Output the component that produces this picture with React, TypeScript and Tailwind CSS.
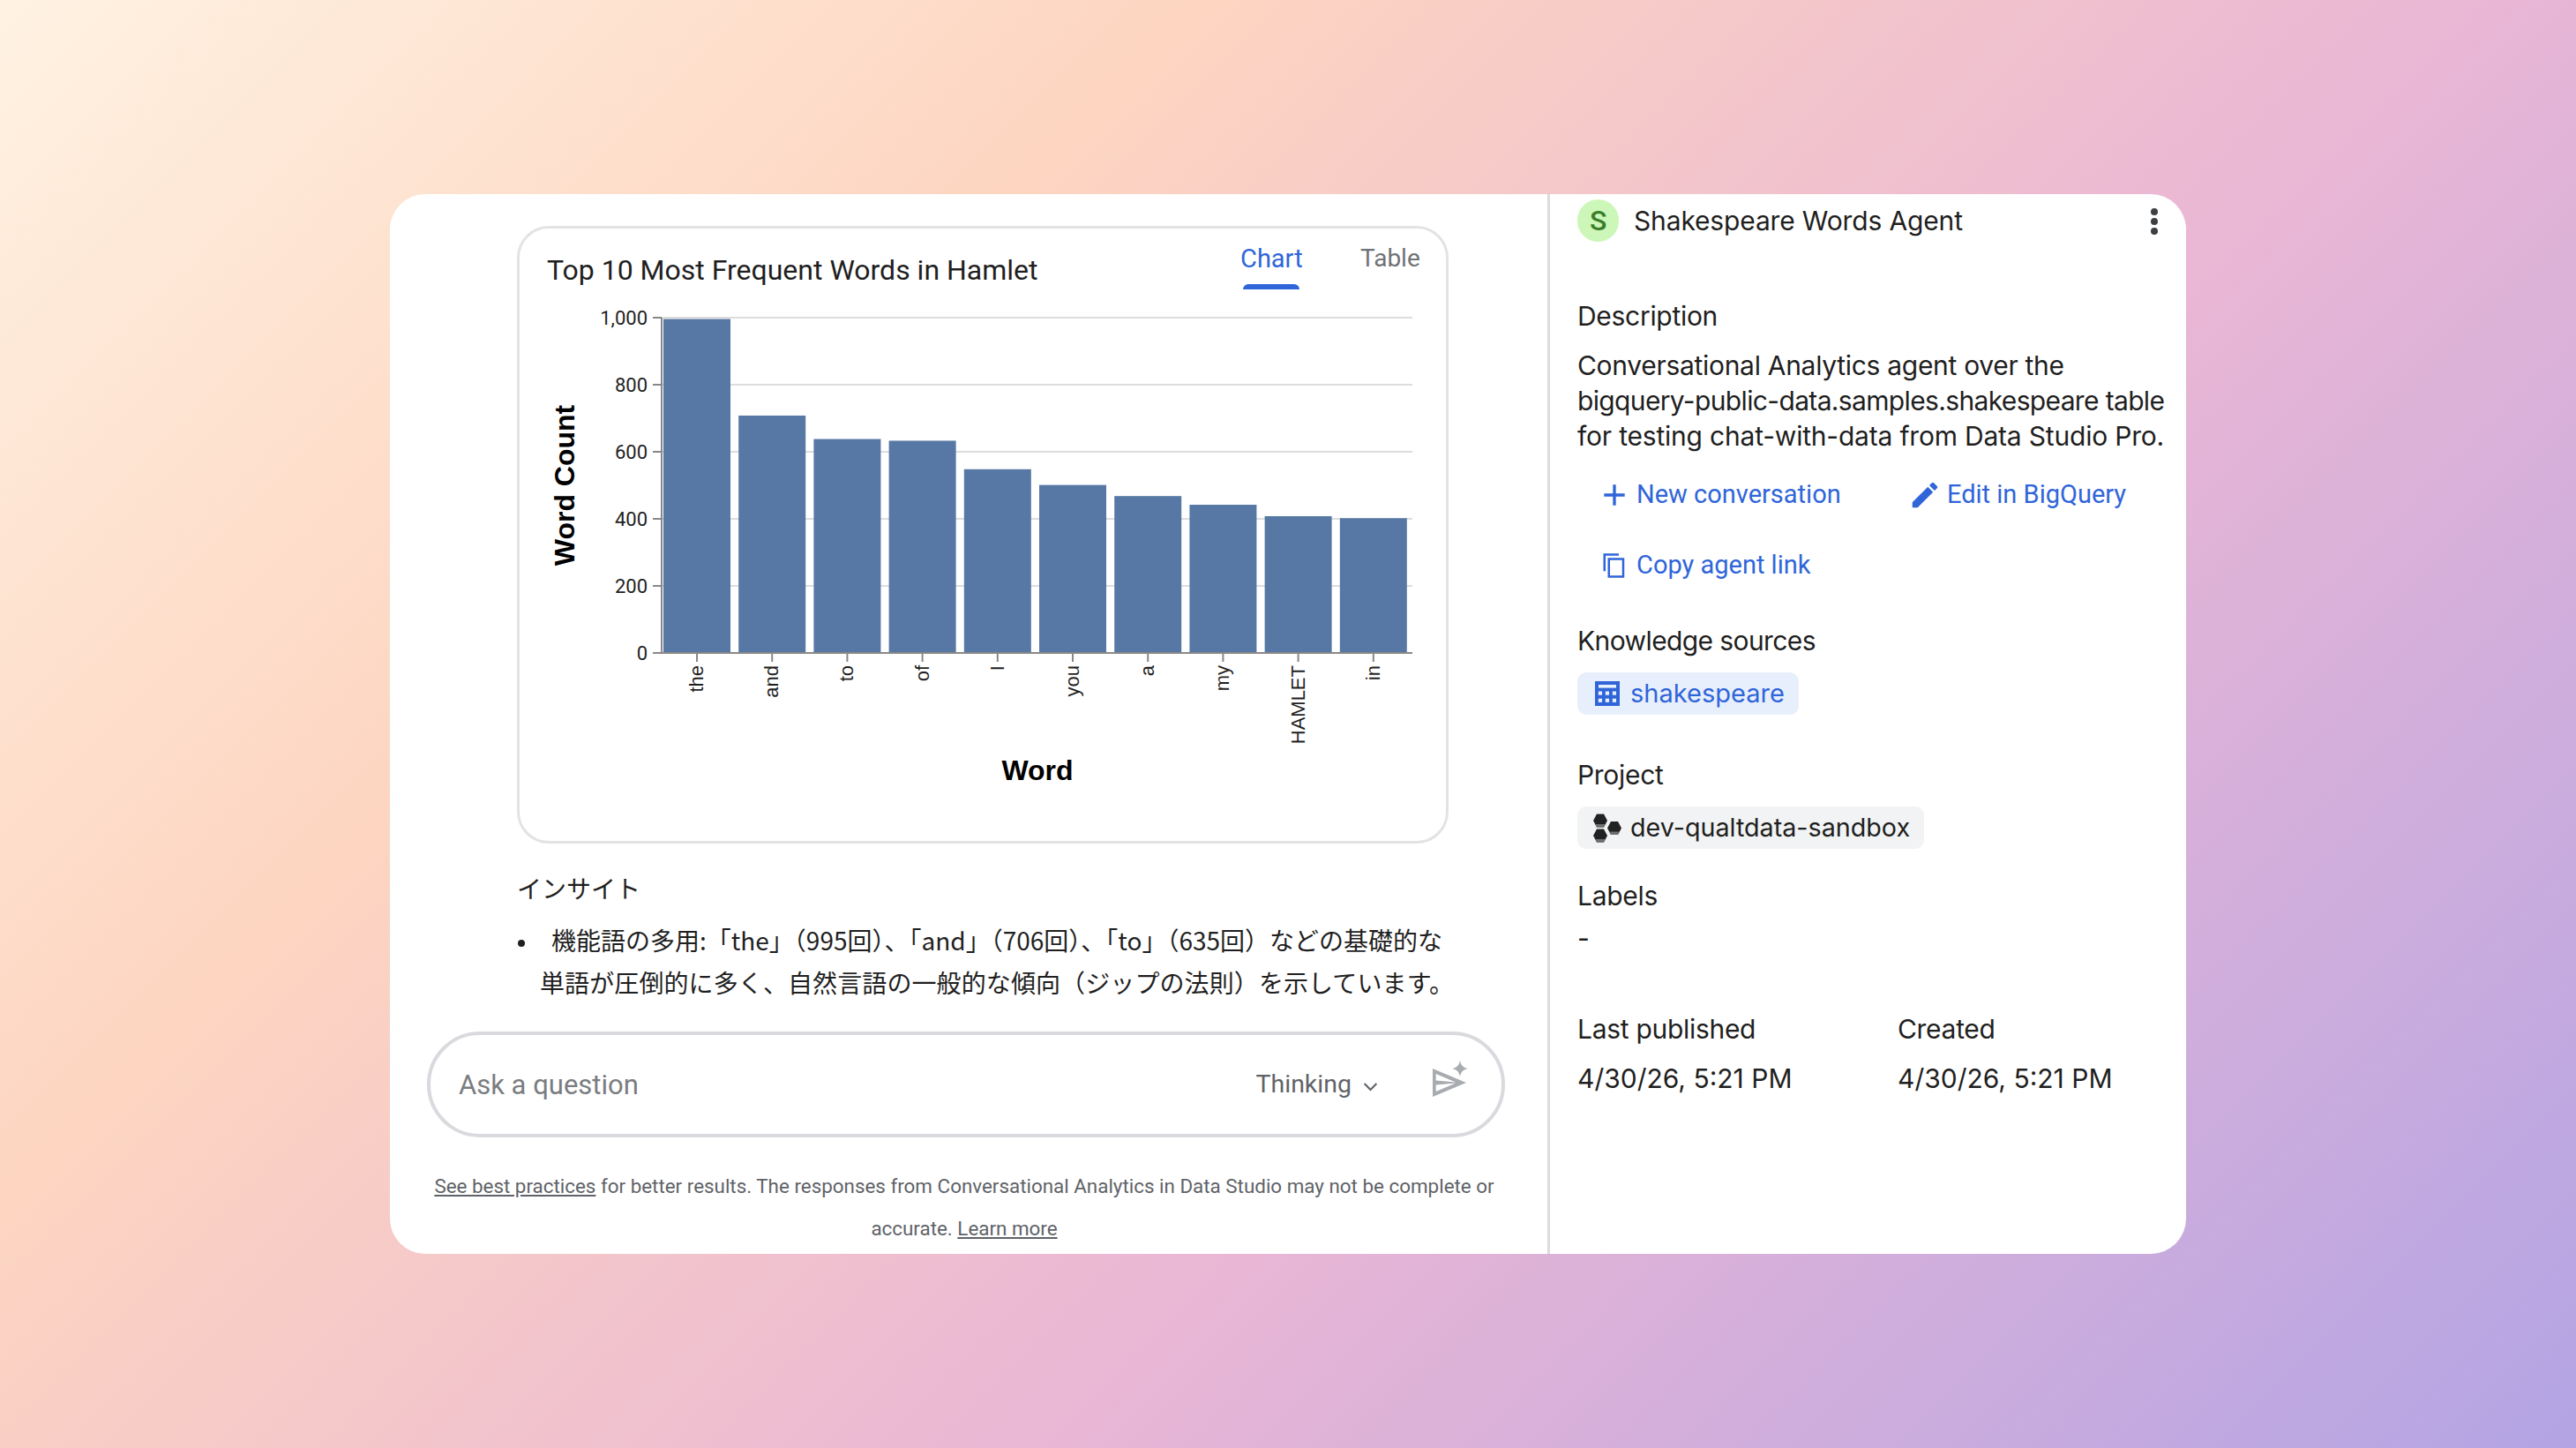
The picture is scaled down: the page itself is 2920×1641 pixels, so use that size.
// App.tsx
// Conversational Analytics agent panel with a Vega-style bar chart.

import React from 'react';

const BARS = [
    { word: 'the', value: 996 },
    { word: 'and', value: 708 },
    { word: 'to', value: 638 },
    { word: 'of', value: 633 },
    { word: 'I', value: 548 },
    { word: 'you', value: 501 },
    { word: 'a', value: 468 },
    { word: 'my', value: 442 },
    { word: 'HAMLET', value: 408 },
    { word: 'in', value: 402 },
];

const Y_TICKS = [0, 200, 400, 600, 800, 1000];

// Chart origin inside the svg; the svg's left edge is the card's inner left edge
const PLOT_LEFT = 161;
const PLOT_RIGHT = 1012;
const PLOT_TOP = 101;
const PLOT_H = 380;

const BarChart: React.FC = () => {
    const y = (v: number) => PLOT_TOP + PLOT_H - (v / 1000) * PLOT_H;
    return (
        <svg width="1050" height="640" viewBox="0 0 1050 640" className="block">
            {Y_TICKS.map((t) => (
                <g key={t}>
                    <line x1={PLOT_LEFT - 10} x2={PLOT_RIGHT} y1={y(t)} y2={y(t)} stroke="#dddddd" strokeWidth="2" />
                    <line x1={PLOT_LEFT - 10} x2={PLOT_LEFT} y1={y(t)} y2={y(t)} stroke="#888888" strokeWidth="2" />
                    <text x={PLOT_LEFT - 16} y={y(t) + 8} textAnchor="end" fontSize="22" fill="#1f1f1f" fontFamily="Roboto, sans-serif">
                        {t.toLocaleString('en-US')}
                    </text>
                </g>
            ))}
            {BARS.map((b, i) => {
                const x = PLOT_LEFT + 2 + i * 85.2;
                const cx = x + 38;
                return (
                    <g key={b.word}>
                        <rect x={x} y={y(b.value)} width="76" height={PLOT_TOP + PLOT_H - y(b.value)} fill="#5778a4" />
                        <line x1={cx} x2={cx} y1={PLOT_TOP + PLOT_H} y2={PLOT_TOP + PLOT_H + 10} stroke="#888888" strokeWidth="2" />
                        <text
                            transform={`translate(${cx + 7} ${PLOT_TOP + PLOT_H + 14}) rotate(-90)`}
                            textAnchor="end"
                            fontSize="22"
                            fill="#1f1f1f"
                            fontFamily="'Liberation Sans', sans-serif"
                        >
                            {b.word}
                        </text>
                    </g>
                );
            })}
            <line x1={PLOT_LEFT} x2={PLOT_LEFT} y1={PLOT_TOP} y2={PLOT_TOP + PLOT_H} stroke="#888888" strokeWidth="2" />
            <line x1={PLOT_LEFT - 10} x2={PLOT_RIGHT} y1={PLOT_TOP + PLOT_H} y2={PLOT_TOP + PLOT_H} stroke="#888888" strokeWidth="2" />
            <text
                transform={`translate(62 ${PLOT_TOP + 190}) rotate(-90)`}
                textAnchor="middle"
                fontSize="32"
                fontWeight="700"
                fill="#000000"
                fontFamily="'Liberation Sans', sans-serif"
            >
                Word Count
            </text>
            <text x="587" y="625" textAnchor="middle" fontSize="32" fontWeight="700" fill="#000000" fontFamily="'Liberation Sans', sans-serif">
                Word
            </text>
        </svg>
    );
};

const PlusIcon = () => (
    <svg viewBox="0 0 24 24" className="w-[40px] h-[40px] fill-current">
        <path d="M19 13h-6v6h-2v-6H5v-2h6V5h2v6h6v2z" />
    </svg>
);

const EditIcon = () => (
    <svg viewBox="0 0 24 24" className="w-[38px] h-[38px] fill-current">
        <path d="M3 17.25V21h3.75L17.81 9.94l-3.75-3.75L3 17.25zM20.71 7.04a1 1 0 0 0 0-1.41l-2.34-2.34a1 1 0 0 0-1.41 0l-1.83 1.83 3.75 3.75 1.83-1.83z" />
    </svg>
);

const CopyIcon = () => (
    <svg viewBox="0 0 24 24" className="w-[30px] h-[30px] fill-current">
        <path d="M16 1H2v16h2V3h12V1zm5 4H6v18h15V5zm-2 16H8V7h11v14z" />
    </svg>
);

const TableIcon = () => (
    <svg viewBox="0 0 28 28" className="w-[28px] h-[28px] shrink-0">
        <rect width="28" height="28" fill="#2f65d9" />
        <rect x="4" y="4" width="20" height="3.6" fill="#e8effc" />
        {[11.5, 19.7].map((cy) =>
            [3.8, 11.8, 19.8].map((cx) => <rect key={`${cx}-${cy}`} x={cx} y={cy} width="4.2" height="4.2" fill="#e8effc" />)
        )}
    </svg>
);

const Hex: React.FC<{ cx: number; cy: number }> = ({ cx, cy }) => (
    <g>
        <path d={`M${cx - 8} ${cy}l4-7.5h8l4 7.5-4 7.5h-8z`} fill="#222222" />
        <path d={`M${cx - 5.9} ${cy + 4}h11.8l-1.9 3.5h-8z`} fill="#6f6f6f" />
    </g>
);

const ProjectIcon = () => (
    <svg viewBox="0 0 32 33" className="w-[32px] h-[33px] shrink-0">
        <Hex cx={8} cy={8} />
        <Hex cx={24} cy={16.5} />
        <Hex cx={8} cy={25} />
    </svg>
);

const SendSparkIcon = () => (
    <svg viewBox="0 0 40 41" className="w-[40px] h-[41px]" fill="#a8abaf">
        <path fillRule="evenodd" d="M0 9L38 25 0 41ZM3.700 15L26 24.400 3.700 22.500ZM3.700 27.500L26 25.600 3.700 35Z" />
        <path d="M31 0c1 5 3.500 8 9 9-5.500 1-8 4-9 9-1-5-3.500-8-9-9 5.500-1 8-4 9-9z" />
    </svg>
);

const LinkButton: React.FC<{ icon: React.ReactNode; label: string; className?: string }> = ({ icon, label, className }) => (
    <button className={`flex items-center gap-[5px] h-[48px] text-[#2f65d9] text-[29px] tracking-normal font-['Roboto',sans-serif] ${className ?? ''}`}>
        <span className="w-[40px] h-[40px] flex items-center justify-center">{icon}</span>
        <span>{label}</span>
    </button>
);

const App: React.FC = () => {
    return (
        <div className="w-full h-[1641px] flex items-center justify-center bg-[linear-gradient(135deg,#fff2e2_0%,#fdd5c1_30%,#e9b6d5_62%,#b3a4e4_100%)] font-['Roboto','Noto_Sans_CJK_JP',sans-serif] text-[#1f1f1f]">
            <div className="w-[2036px] h-[1201px] bg-white rounded-[40px] flex overflow-hidden">
                {/* Conversation column */}
                <div className="w-[1312px] shrink-0 flex flex-col pt-[36px]">
                    <div className="ml-[144px] w-[1056px] h-[700px] shrink-0 rounded-[36px] border-[3px] border-[#e3e3e3] overflow-hidden">
                        <div className="relative h-0">
                            <div className="absolute left-[31px] top-[25px] text-[32px] leading-[44px]">
                                Top 10 Most Frequent Words in Hamlet
                            </div>
                            <div className="absolute left-[817px] top-[14px] flex flex-col items-center">
                                <span className="text-[29px] leading-[40px] text-[#2f65d9]">Chart</span>
                                <span className="mt-[9px] w-[64px] h-[6px] rounded-t-[6px] bg-[#2f65d9]" />
                            </div>
                            <span className="absolute left-[953px] top-[14px] text-[28px] leading-[40px] text-[#6f7276]">Table</span>
                        </div>
                        <BarChart />
                    </div>

                    <div className="ml-[144px] mt-[30px] text-[28px] leading-[40px] font-['Noto_Sans_CJK_JP',sans-serif]">インサイト</div>
                    <ul className="ml-[145px] mt-[15px] w-[1100px] list-none pl-[25px] -indent-[25px] text-[28px] leading-[48px] font-['Noto_Sans_CJK_JP',sans-serif]">
                        <li>
                            <span className="inline-block w-[8px] h-[8px] rounded-full bg-[#1f1f1f] align-middle mr-[30px]" />
                            機能語の多用:「the」（995回）、「and」（706回）、「to」（635回）などの基礎的な
                            <br />
                            <span className="tracking-[0.1px]">単語が圧倒的に多く、自然言語の一般的な傾向（ジップの法則）を示しています。</span>
                        </li>
                    </ul>

                    <div className="ml-[42px] mt-[32px] w-[1222px] h-[120px] shrink-0 rounded-full border-[4px] border-[#d9dade] flex items-center pl-[32px] pr-[38px]">
                        <span className="text-[31px] mt-[2px] text-[#7a7d81]">Ask a question</span>
                        <span className="ml-auto text-[28.500px] text-[#5f6368]">Thinking</span>
                        <svg viewBox="0 0 12 8" className="ml-[13px] w-[17px] h-[11px] mt-[4px]" fill="none" stroke="#5f6368" strokeWidth="1.6">
                            <path d="M1 1.500l5 5 5-5" />
                        </svg>
                        <div className="ml-[62px] mb-[14px]">
                            <SendSparkIcon />
                        </div>
                    </div>

                    <div className="mt-[31px] pr-[10px] text-center text-[22.400px] leading-[48px] text-[#5f6368]">
                        <a className="underline">See best practices</a> for better results. The responses from Conversational Analytics in Data Studio may not be complete or
                        <br />
                        accurate. <a className="underline">Learn more</a>
                    </div>
                </div>

                {/* Agent details column */}
                <div className="flex-1 min-w-0 border-l-[3px] border-[#dcdcdf] pl-[31px] pr-[24px] pt-[6px] text-[30px] tracking-[-0.3px] font-['Inter',sans-serif]">
                    <div className="flex items-center h-[48px]">
                        <div className="w-[47px] h-[48px] shrink-0 rounded-full bg-[#ccf7b8] flex items-center justify-center text-[32px] text-[#3a7d2c] font-medium font-['Roboto',sans-serif]">S</div>
                        <span className="ml-[17px] flex-1 leading-[40px] tracking-[-0.15px]">Shakespeare Words Agent</span>
                        <svg viewBox="0 0 8 32" className="w-[8px] h-[32px] mr-[8px] mt-[2px] shrink-0" fill="#3c4043">
                            <circle cx="4" cy="5" r="4" />
                            <circle cx="4" cy="16" r="4" />
                            <circle cx="4" cy="27" r="4" />
                        </svg>
                    </div>

                    <div className="mt-[64px] leading-[40px]">Description</div>
                    <p className="mt-[16px] leading-[40px] whitespace-nowrap">
                        Conversational Analytics agent over the
                        <br />
                        <span className="tracking-[-0.65px]">bigquery-public-data.samples.shakespeare table</span>
                        <br />
                        <span className="tracking-[-0.2px]">for testing chat-with-data from Data Studio Pro.</span>
                    </p>

                    <div className="mt-[23px] flex">
                        <LinkButton icon={<PlusIcon />} label="New conversation" className="ml-[22px] w-[352px]" />
                        <LinkButton icon={<EditIcon />} label="Edit in BigQuery" />
                    </div>
                    <LinkButton icon={<CopyIcon />} label="Copy agent link" className="ml-[22px] mt-[32px]" />

                    <div className="mt-[41px] leading-[40px] tracking-[-0.6px]">Knowledge sources</div>
                    <div className="mt-[16px] inline-flex items-center h-[48px] pl-[20px] pr-[16px] gap-[12px] rounded-[10px] bg-[#e8effc] text-[29px] tracking-normal text-[#2f65d9]">
                        <TableIcon />
                        <span>shakespeare</span>
                    </div>

                    <div className="mt-[46px] leading-[40px]">Project</div>
                    <div className="mt-[16px] inline-flex items-center h-[48px] pl-[18px] pr-[16px] gap-[10px] rounded-[10px] bg-[#f1f3f4] text-[28.700px] tracking-normal">
                        <ProjectIcon />
                        <span>dev-qualtdata-sandbox</span>
                    </div>

                    <div className="mt-[28px] leading-[40px]">Labels</div>
                    <div className="mt-[8px] leading-[40px]">-</div>

                    <div className="mt-[63px] grid grid-cols-[363px_1fr] gap-y-[16px] leading-[40px]">
                        <span>Last published</span>
                        <span>Created</span>
                        <span className="tracking-normal">4/30/26, 5:21 PM</span>
                        <span className="tracking-normal">4/30/26, 5:21 PM</span>
                    </div>
                </div>
            </div>
        </div>
    );
};

export default App;
